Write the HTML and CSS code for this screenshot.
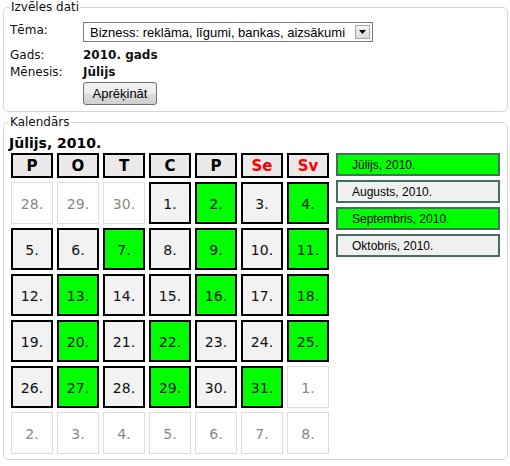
FILE: index.html
```html
<!DOCTYPE html>
<html lang="lv">
<head>
<meta charset="utf-8">
<title>Kalendārs</title>
<link rel="stylesheet" href="styles.css">
</head>
<body>
<fieldset class="panel panel-form">
  <legend>Izvēles dati</legend>
  <div class="form-grid">
    <div class="label">Tēma:</div>
    <div class="select">
      <span class="select-value">Bizness: reklāma, līgumi, bankas, aizsākumi</span>
      <span class="select-arrow"><svg width="7" height="4" viewBox="0 0 7 4"><path d="M0 0H7L3.5 4Z" fill="#000"/></svg></span>
    </div>
    <div class="label row-gap">Gads:</div>
    <div class="value row-gap">2010. gads</div>
    <div class="label">Mēnesis:</div>
    <div class="value">Jūlijs</div>
    <div></div>
    <button class="btn" type="button">Aprēķināt</button>
  </div>
</fieldset>
<fieldset class="panel panel-cal">
  <legend>Kalendārs</legend>
  <div class="cal-title">Jūlijs, 2010.</div>
  <div class="cal-body">
    <div class="cal-grid">
      <div class="hd">P</div><div class="hd">O</div><div class="hd">T</div><div class="hd">C</div><div class="hd">P</div><div class="hd hd-we">Se</div><div class="hd hd-we">Sv</div>
      <div class="day day-out">28.</div><div class="day day-out">29.</div><div class="day day-out">30.</div><div class="day">1.</div><div class="day day-on">2.</div><div class="day">3.</div><div class="day day-on">4.</div>
      <div class="day">5.</div><div class="day">6.</div><div class="day day-on">7.</div><div class="day">8.</div><div class="day day-on">9.</div><div class="day">10.</div><div class="day day-on">11.</div>
      <div class="day">12.</div><div class="day day-on">13.</div><div class="day">14.</div><div class="day">15.</div><div class="day day-on">16.</div><div class="day">17.</div><div class="day day-on">18.</div>
      <div class="day">19.</div><div class="day day-on">20.</div><div class="day">21.</div><div class="day day-on">22.</div><div class="day">23.</div><div class="day">24.</div><div class="day day-on">25.</div>
      <div class="day">26.</div><div class="day day-on">27.</div><div class="day">28.</div><div class="day day-on">29.</div><div class="day">30.</div><div class="day day-on">31.</div><div class="day day-out">1.</div>
      <div class="day day-out">2.</div><div class="day day-out">3.</div><div class="day day-out">4.</div><div class="day day-out">5.</div><div class="day day-out">6.</div><div class="day day-out">7.</div><div class="day day-out">8.</div>
    </div>
    <div class="months">
      <div class="month month-on">Jūlijs, 2010.</div>
      <div class="month">Augusts, 2010.</div>
      <div class="month month-on">Septembris, 2010.</div>
      <div class="month">Oktobris, 2010.</div>
    </div>
  </div>
</fieldset>
</body>
</html>
```

FILE: styles.css
```css
html, body {
  background: #fff;
}
body {
  margin: 0;
  padding: 0 2px 0 3px;
  font-family: "DejaVu Sans", sans-serif;
  font-size: 12px;
  color: #111;
}
.panel {
  margin: 0;
  min-width: 0;
  border: 1px solid #d6d6d6;
  border-radius: 5px;
}
.panel legend {
  font-size: 12px;
  line-height: 15px;
  padding: 0 1px;
  color: #111;
}
.panel-form {
  padding: 7px 6px 6px 6px;
}
.form-grid {
  display: grid;
  grid-template-columns: 73px auto;
  align-items: start;
  justify-items: start;
}
.label {
  line-height: 17px;
}
.row-gap {
  margin-top: 5px;
}
.value {
  font-weight: bold;
  line-height: 17px;
}
.select {
  box-sizing: border-box;
  width: 290px;
  height: 20px;
  border: 1px solid #7a7a7a;
  background: #fff;
  display: flex;
  align-items: center;
  font-family: "Liberation Sans", Arial, sans-serif;
  font-size: 13px;
  color: #000;
}
.select-value {
  flex: 1;
  padding-left: 6px;
  white-space: nowrap;
}
.select-arrow {
  box-sizing: border-box;
  width: 15px;
  height: 14px;
  margin-right: 2px;
  border: 1px solid #a7a7a7;
  background: linear-gradient(#f7f7f7, #dadada);
  display: flex;
  align-items: center;
  justify-content: center;
}
.btn {
  margin: 1px 0 0 0;
  box-sizing: border-box;
  width: 74px;
  height: 23px;
  padding: 0;
  border: 1px solid #707070;
  border-radius: 3px;
  background: linear-gradient(#f2f2f2 0%, #ebebeb 50%, #dddddd 51%, #cfcfcf 100%);
  font-family: "Liberation Sans", Arial, sans-serif;
  font-size: 13px;
  color: #000;
}
.panel-cal {
  margin-top: 3px;
  padding: 6px 6px 5px 5px;
}
.cal-title {
  font-weight: bold;
  font-size: 14px;
  line-height: 14px;
  margin-bottom: 3px;
  color: #000;
}
.cal-body {
  display: flex;
  align-items: flex-start;
  gap: 7px;
  margin-left: 2px;
}
.cal-grid {
  display: grid;
  grid-template-columns: repeat(7, 42px);
  grid-template-rows: 25px repeat(6, 42px);
  gap: 4px;
}
.hd {
  box-sizing: border-box;
  border: 2px solid #000;
  background: #ebe9e9;
  font-weight: bold;
  font-size: 15px;
  color: #000;
  display: flex;
  align-items: center;
  justify-content: center;
}
.hd-we {
  color: #f00;
}
.day {
  box-sizing: border-box;
  border: 2px solid #000;
  background: #f2f2f2;
  font-size: 14px;
  color: #111;
  display: flex;
  align-items: center;
  justify-content: center;
  padding-top: 2px;
}
.day-on {
  background: #00ff00;
}
.day-out {
  border: 1px solid #dcdcdc;
  background: #fff;
  color: #888;
}
.months {
  display: flex;
  flex-direction: column;
  gap: 4px;
  width: 164px;
}
.month {
  box-sizing: border-box;
  height: 23px;
  border: 2px solid #4a6b62;
  background: #f0f0f0;
  font-family: "Liberation Sans", Arial, sans-serif;
  font-size: 12px;
  color: #000;
  padding-left: 14px;
  display: flex;
  align-items: center;
}
.month-on {
  background: #00ff00;
}
```
